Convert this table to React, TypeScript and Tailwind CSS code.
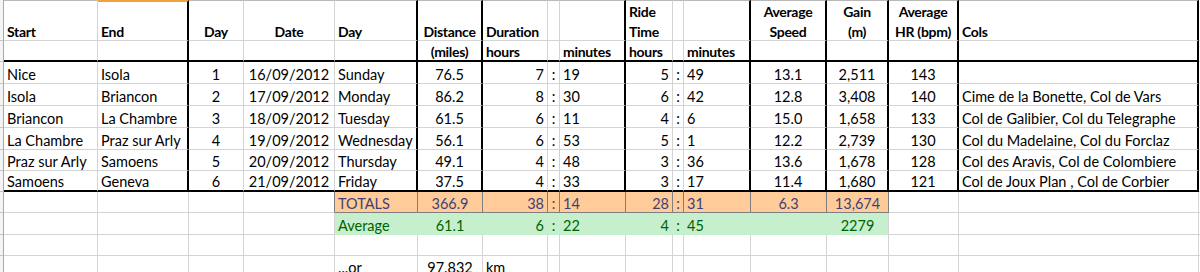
import React from 'react';

type Cell = {
  t?: React.ReactNode;
  a?: 'l' | 'c' | 'r';
  fill?: string;
  r?: string;
  b?: string;
};

// column widths A..P
const W = [
  'w-[94px]',
  'w-[91px]',
  'w-[55px]',
  'w-[91px]',
  'w-[83px]',
  'w-[65px]',
  'w-[65px]',
  'w-[12px]',
  'w-[66px]',
  'w-[47px]',
  'w-[11px]',
  'w-[67px]',
  'w-[76px]',
  'w-[62px]',
  'w-[70px]',
  'w-[240px]',
];

// columns with a thick right border inside the table block
const THICK = new Set([1, 4, 5, 8, 11, 12, 13, 14, 15]);

const GRID = 'border-r border-r-[#d4d4d4]';

function Row({
  h,
  cells,
  thickV = false,
  thickBottom = false,
  top = false,
  bold = false,
}: {
  h: string;
  cells: Cell[];
  thickV?: boolean;
  thickBottom?: boolean;
  top?: boolean;
  bold?: boolean;
}) {
  return (
    <div className={`flex ${h} ${bold ? 'font-bold text-[14px] tracking-[-0.3px]' : ''}`}>
      <div className="w-[4px] shrink-0 border-r border-b border-r-[#a9a9a9] border-b-[#c4c4c4] bg-[#f4f4f4]" />
      {W.map((w, i) => {
        const c = cells[i] ?? {};
        const right = c.r ?? (thickV && THICK.has(i) ? 'border-r-2 border-r-black' : GRID);
        const bottom =
          c.b ?? (thickBottom ? 'border-b-2 border-b-black' : 'border-b border-b-[#d4d4d4]');
        const align =
          c.a === 'c'
            ? 'justify-center text-center'
            : c.a === 'r'
              ? 'justify-end text-right'
              : 'justify-start text-left';
        const topLine = top
          ? i === 1
            ? 'border-t-2 border-t-[#f0a33a]'
            : 'border-t border-t-[#b8b8b8]'
          : '';
        return (
          <div
            key={i}
            className={`${w} shrink-0 flex items-end px-[3px] whitespace-nowrap ${right} ${bottom} ${topLine} ${align} ${c.fill ?? ''}`}
          >
            <div className="leading-[20px] -mb-[2px]">{c.t}</div>
          </div>
        );
      })}
      <div className="flex-1 border-b border-b-[#d4d4d4]" />
    </div>
  );
}

const two = (a: string, b: string) => (
  <div className="flex flex-col">
    <span>{a}</span>
    <span>{b}</span>
  </div>
);

const trips = [
  ['Nice', 'Isola', '1', '16/09/2012', 'Sunday', '76.5', '7', '19', '5', '49', '13.1', '2,511', '143', ''],
  ['Isola', 'Briancon', '2', '17/09/2012', 'Monday', '86.2', '8', '30', '6', '42', '12.8', '3,408', '140', 'Cime de la Bonette, Col de Vars'],
  ['Briancon', 'La Chambre', '3', '18/09/2012', 'Tuesday', '61.5', '6', '11', '4', '6', '15.0', '1,658', '133', 'Col de Galibier, Col du Telegraphe'],
  ['La Chambre', 'Praz sur Arly', '4', '19/09/2012', 'Wednesday', '56.1', '6', '53', '5', '1', '12.2', '2,739', '130', 'Col du Madelaine, Col du Forclaz'],
  ['Praz sur Arly', 'Samoens', '5', '20/09/2012', 'Thursday', '49.1', '4', '48', '3', '36', '13.6', '1,678', '128', 'Col des Aravis, Col de Colombiere'],
  ['Samoens', 'Geneva', '6', '21/09/2012', 'Friday', '37.5', '4', '33', '3', '17', '11.4', '1,680', '121', 'Col de Joux Plan , Col de Corbier'],
];

function tripCells(d: string[]): Cell[] {
  return [
    { t: d[0] },
    { t: d[1] },
    { t: d[2], a: 'c' },
    { t: d[3], a: 'c' },
    { t: d[4] },
    { t: d[5], a: 'c' },
    { t: d[6], a: 'r' },
    { t: ':', a: 'c' },
    { t: d[7] },
    { t: d[8], a: 'r' },
    { t: ':', a: 'c' },
    { t: d[9] },
    { t: d[10], a: 'c' },
    { t: d[11], a: 'c' },
    { t: d[12], a: 'c' },
    { t: d[13] },
  ];
}

const ORANGE = 'bg-[#ffcc99] text-[#3f3f76]';
const OR_R = 'border-r border-r-[#7f7f7f]';
const OR_B = 'border-b border-b-[#7f7f7f]';
const GREEN = 'bg-[#c6efce] text-[#006100]';
const GR_R = 'border-r border-r-[#c6efce]';
const GR_B = 'border-b border-b-[#c6efce]';

function totals(vals: string[]): Cell[] {
  const [label, dist, dh, dm, rh, rm, spd, gain] = vals;
  const o = (t: string, a: 'l' | 'c' | 'r' = 'l'): Cell => ({ t, a, fill: ORANGE, r: OR_R, b: OR_B });
  return [
    {},
    {},
    {},
    { r: OR_R },
    o(label),
    o(dist, 'c'),
    o(dh, 'r'),
    o(':', 'c'),
    o(dm),
    o(rh, 'r'),
    o(':', 'c'),
    o(rm),
    o(spd, 'c'),
    o(gain, 'c'),
  ];
}

function averages(): Cell[] {
  const g = (t: string, a: 'l' | 'c' | 'r' = 'l', last = false): Cell => ({
    t,
    a,
    fill: GREEN,
    r: last ? GRID : GR_R,
    b: GR_B,
  });
  return [
    {},
    {},
    {},
    {},
    g('Average'),
    g('61.1', 'c'),
    g('6', 'r'),
    g(':', 'c'),
    g('22'),
    g('4', 'r'),
    g(':', 'c'),
    g('45'),
    g(''),
    g('2279', 'c', true),
  ];
}

export default function App() {
  return (
    <div className="w-[1200px] h-[272px] overflow-hidden bg-white text-black text-[14.5px] font-['Lato',sans-serif]">
      <Row
        h="h-[41px]"
        top
        thickV
        bold
        cells={[
          { t: 'Start' },
          { t: 'End' },
          { t: 'Day', a: 'c' },
          { t: 'Date', a: 'c' },
          { t: 'Day' },
          { t: 'Distance', a: 'c' },
          { t: 'Duration' },
          {},
          {},
          { t: two('Ride', 'Time') },
          {},
          {},
          { t: two('Average', 'Speed'), a: 'c' },
          { t: two('Gain', '(m)'), a: 'c' },
          { t: two('Average', 'HR (bpm)'), a: 'c' },
          { t: 'Cols' },
        ]}
      />
      <Row
        h="h-[21px]"
        thickV
        thickBottom
        bold
        cells={[
          {},
          {},
          {},
          {},
          {},
          { t: '(miles)', a: 'c' },
          { t: 'hours' },
          {},
          { t: 'minutes' },
          { t: 'hours' },
          {},
          { t: 'minutes' },
        ]}
      />
      {trips.map((d, i) => (
        <Row
          key={d[0]}
          h={i < 4 ? 'h-[22px]' : 'h-[21px]'}
          thickV
          thickBottom={i === trips.length - 1}
          cells={tripCells(d)}
        />
      ))}
      <Row
        h="h-[21px]"
        cells={totals(['TOTALS', '366.9', '38', '14', '28', '31', '6.3', '13,674'])}
      />
      <Row h="h-[22px]" cells={averages()} />
      <Row h="h-[21px]" cells={[]} />
      <Row
        h="h-[21px]"
        cells={[{}, {}, {}, {}, { t: '...or' }, { t: '97.832', a: 'c' }, { t: 'km' }]}
      />
    </div>
  );
}
